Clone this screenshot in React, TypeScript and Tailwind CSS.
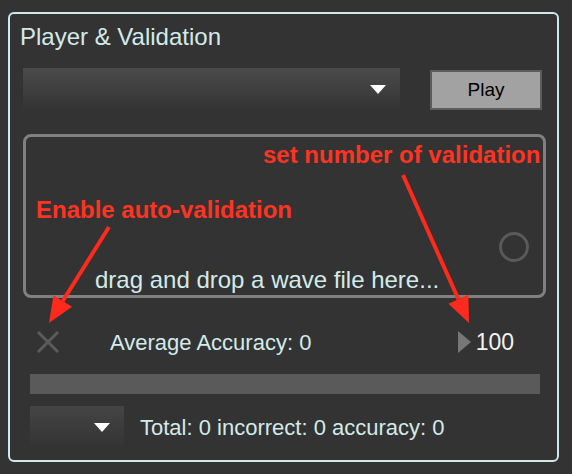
function Caret({ className }: { className?: string }) {
  return (
    <svg width="16" height="9" viewBox="0 0 16 9" className={className}>
      <polygon points="0,0 16,0 8,9" fill="#ffffff" />
    </svg>
  );
}

function Arrows() {
  return (
    <svg
      width="572"
      height="474"
      className="pointer-events-none absolute left-0 top-0"
    >
      <line x1="109" y1="227" x2="62.8" y2="301" stroke="#ff2a1c" strokeWidth="4" />
      <polygon points="49,323 72.1,306.8 53.5,295.2" fill="#ff2a1c" />
      <line x1="403" y1="175" x2="458.4" y2="299.3" stroke="#ff2a1c" strokeWidth="4" />
      <polygon points="469,323 468.4,294.8 448.4,303.8" fill="#ff2a1c" />
    </svg>
  );
}

export default function App() {
  return (
    <div className="relative h-[474px] w-[572px] bg-[#333333] pl-[8px] pt-[12px] font-['Liberation_Sans',Arial,sans-serif] text-[#d3eaea]">
      <div className="flex h-[450px] w-[551px] flex-col rounded-[6px] border-2 border-[#cfe8e8] px-[13px]">
        <div className="-ml-[3px] pt-[9px] text-[24px] leading-[28px]">
          Player &amp; Validation
        </div>

        <div className="mt-[17px] flex items-start justify-between">
          <div className="flex h-[42px] w-[377px] items-center justify-end bg-gradient-to-b from-[#4b4b4b] to-[#343434] pr-[14px]">
            <Caret />
          </div>
          <button className="mr-[2px] mt-[2px] h-[40px] w-[112px] border-2 border-[#5c5c5c] bg-[#a2a2a2] text-[19px] text-black">
            Play
          </button>
        </div>

        <div className="mt-[24px] flex h-[164px] w-[523px] flex-col rounded-[8px] border-[3px] border-[#808080]">
          <div className="flex flex-1 items-end justify-end pb-[6px] pr-[14px]">
            <div className="h-[30px] w-[30px] rounded-full border-[3px] border-[#5a5a5a]" />
          </div>
          <div className="pb-[3px] pl-[69px] text-[24px] leading-[24px]">
            drag and drop a wave file here...
          </div>
        </div>

        <div className="mt-[26px] flex h-[36px] items-center">
          <svg width="24" height="24" viewBox="0 0 24 24" className="ml-[13px]">
            <line x1="2" y1="2" x2="22" y2="22" stroke="#5b5b5b" strokeWidth="3" />
            <line x1="22" y1="2" x2="2" y2="22" stroke="#5b5b5b" strokeWidth="3" />
          </svg>
          <div className="ml-[50px] text-[22px]">Average Accuracy: 0</div>
          <div className="ml-auto mr-[30px] flex items-center gap-[5px]">
            <svg width="13" height="22" viewBox="0 0 13 22">
              <polygon points="0,0 13,11 0,22" fill="#777777" />
            </svg>
            <span className="text-[23px] text-[#f2f2f2]">100</span>
          </div>
        </div>

        <div className="ml-[7px] mt-[14px] h-[20px] w-[510px] bg-[#5a5a5a]" />

        <div className="mt-[12px] flex items-center">
          <div className="ml-[7px] flex h-[42px] w-[94px] items-center justify-end bg-gradient-to-b from-[#454545] to-[#333333] pr-[14px]">
            <Caret />
          </div>
          <div className="ml-[16px] text-[22px]">
            Total: 0 incorrect: 0 accuracy: 0
          </div>
        </div>
      </div>

      <div className="pointer-events-none absolute left-[263px] top-[141px] text-[24px] font-bold leading-[28px] text-[#ff3322]">
        set number of validation
      </div>
      <div className="pointer-events-none absolute left-[36px] top-[196px] text-[24px] font-bold leading-[28px] text-[#ff3322]">
        Enable auto-validation
      </div>
      <Arrows />
    </div>
  );
}
